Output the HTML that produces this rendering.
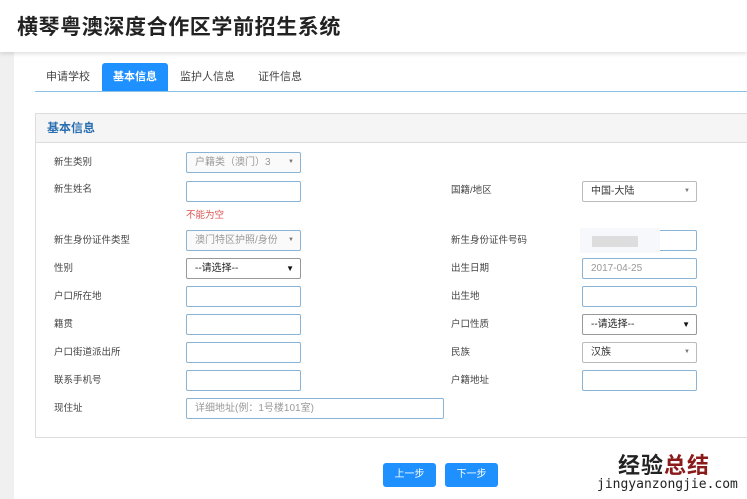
<!DOCTYPE html><html><head><meta charset="utf-8"><style>
*{box-sizing:border-box;margin:0;padding:0}
body{width:747px;height:499px;overflow:hidden;background:#f0f0f0;font-family:"Liberation Sans","Noto Sans CJK SC",sans-serif;position:relative;font-size:10px;color:#333}
.hd{position:absolute;left:0;top:0;width:747px;height:52px;background:#fff;box-shadow:0 2px 4px rgba(0,0,0,.12);z-index:2}
.hd h1{position:absolute;left:17px;top:11px;font-size:21px;font-weight:bold;color:#222;letter-spacing:.6px}
.main{position:absolute;left:14px;top:52px;width:733px;height:447px;background:#fff}
.tab{position:absolute;top:63px;height:28px;line-height:28px;font-size:11px;color:#444}
.tab.on{background:#1e90ff;color:#fff;font-weight:bold;border-radius:3px 3px 0 0;padding:0 11px}
.tline{position:absolute;left:35px;top:91px;width:712px;height:1px;background:#8cc2e8}
.panel{position:absolute;left:35px;top:113px;width:712px;height:325px;border:1px solid #ddd;border-right:none}
.ph{height:29px;background:#f5f5f5;border-bottom:1px solid #ddd;color:#2a6fb0;font-weight:bold;font-size:12px;line-height:28px;padding-left:11px}
.l{position:absolute;font-size:9.5px;color:#444}
.i{position:absolute;width:115px;height:21px;border:1px solid #8ab4d6;border-radius:2px;background:#fff;font-size:10px;color:#999;line-height:19px;padding-left:8px}
.s::after{content:"▼";position:absolute;right:6px;top:0;font-size:6px;color:#777}
.b::after{content:"▼";position:absolute;right:6px;top:0;font-size:8px;color:#111}
.btn{position:absolute;top:463px;width:53px;height:24px;background:#1e90ff;color:#fff;border-radius:3px;text-align:center;line-height:24px;font-size:10px}
</style></head><body>
<div class="hd"><h1>横琴粤澳深度合作区学前招生系统</h1></div>
<div class="main"></div>
<div class="tab" style="left:46px">申请学校</div>
<div class="tab on" style="left:102px">基本信息</div>
<div class="tab" style="left:180px">监护人信息</div>
<div class="tab" style="left:258px">证件信息</div>
<div class="tline"></div>
<div class="panel"><div class="ph">基本信息</div></div>
<div class="l" style="left:54px;top:154px">新生类别</div>
<div class="i s" style="left:186px;top:152px;background:#fafafa">户籍类（澳门）3</div>
<div class="l" style="left:54px;top:181px">新生姓名</div>
<div class="i" style="left:186px;top:181px"></div>
<div class="l" style="left:186px;top:207px;color:#d9534f">不能为空</div>
<div class="l" style="left:451px;top:182px">国籍/地区</div>
<div class="i s" style="left:582px;top:181px;color:#333;border-color:#bbb">中国-大陆</div>
<div class="l" style="left:54px;top:232px">新生身份证件类型</div>
<div class="i s" style="left:186px;top:230px;background:#fafafa">澳门特区护照/身份</div>
<div class="l" style="left:451px;top:232px">新生身份证件号码</div>
<div class="i" style="left:582px;top:230px"></div>
<div style="position:absolute;left:580px;top:228px;width:80px;height:25px;background:#f6f8fb"></div>
<div style="position:absolute;left:592px;top:236px;width:46px;height:11px;background:#ddd"></div>
<div class="l" style="left:54px;top:260px">性别</div>
<div class="i b" style="left:186px;top:258px;color:#222;border-color:#999">--请选择--</div>
<div class="l" style="left:451px;top:260px">出生日期</div>
<div class="i" style="left:582px;top:258px">2017-04-25</div>
<div class="l" style="left:54px;top:288px">户口所在地</div>
<div class="i" style="left:186px;top:286px"></div>
<div class="l" style="left:451px;top:288px">出生地</div>
<div class="i" style="left:582px;top:286px"></div>
<div class="l" style="left:54px;top:316px">籍贯</div>
<div class="i" style="left:186px;top:314px"></div>
<div class="l" style="left:451px;top:316px">户口性质</div>
<div class="i b" style="left:582px;top:314px;color:#222;border-color:#999">--请选择--</div>
<div class="l" style="left:54px;top:344px">户口街道派出所</div>
<div class="i" style="left:186px;top:342px"></div>
<div class="l" style="left:451px;top:344px">民族</div>
<div class="i s" style="left:582px;top:342px;color:#333;border-color:#bbb">汉族</div>
<div class="l" style="left:54px;top:372px">联系手机号</div>
<div class="i" style="left:186px;top:370px"></div>
<div class="l" style="left:451px;top:372px">户籍地址</div>
<div class="i" style="left:582px;top:370px"></div>
<div class="l" style="left:54px;top:400px">现住址</div>
<div class="i" style="left:186px;top:398px;width:258px">详细地址(例：1号楼101室)</div>
<div class="btn" style="left:383px">上一步</div>
<div class="btn" style="left:445px">下一步</div>
<div style="position:absolute;left:618px;top:448px;font-size:22px;font-weight:bold;color:#222;letter-spacing:1px">经验<span style="color:#8b1a1a">总结</span></div>
<div style="position:absolute;left:597px;top:477px;font-size:13px;color:#222;font-family:'DejaVu Sans Mono',monospace">jingyanzongjie.com</div>
</body></html>
